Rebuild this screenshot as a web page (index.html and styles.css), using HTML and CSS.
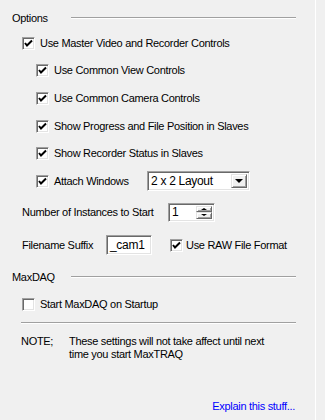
FILE: index.html
```html
<!DOCTYPE html>
<html lang="en">
<head>
  <meta charset="UTF-8">
  <title>Options</title>
  <link rel="stylesheet" href="styles.css">
</head>
<body>
  <div class="panel">

    <!-- Options group -->
    <div class="group-header">
      <span class="group-title">Options</span>
      <span class="etched"></span>
    </div>

    <label class="row first">
      <span class="checkbox checked"><svg width="9" height="9" viewBox="0 0 9 9"><path d="M1 4 L3 6.5 L8 1.5" fill="none" stroke="#000" stroke-width="2"/></svg></span>
      <span>Use Master Video and Recorder Controls</span>
    </label>

    <label class="row sub gap7">
      <span class="checkbox checked"><svg width="9" height="9" viewBox="0 0 9 9"><path d="M1 4 L3 6.5 L8 1.5" fill="none" stroke="#000" stroke-width="2"/></svg></span>
      <span>Use Common View Controls</span>
    </label>

    <label class="row sub">
      <span class="checkbox checked"><svg width="9" height="9" viewBox="0 0 9 9"><path d="M1 4 L3 6.5 L8 1.5" fill="none" stroke="#000" stroke-width="2"/></svg></span>
      <span>Use Common Camera Controls</span>
    </label>

    <label class="row sub">
      <span class="checkbox checked"><svg width="9" height="9" viewBox="0 0 9 9"><path d="M1 4 L3 6.5 L8 1.5" fill="none" stroke="#000" stroke-width="2"/></svg></span>
      <span>Show Progress and File Position in Slaves</span>
    </label>

    <label class="row sub gap7">
      <span class="checkbox checked"><svg width="9" height="9" viewBox="0 0 9 9"><path d="M1 4 L3 6.5 L8 1.5" fill="none" stroke="#000" stroke-width="2"/></svg></span>
      <span>Show Recorder Status in Slaves</span>
    </label>

    <div class="row sub">
      <span class="checkbox checked"><svg width="9" height="9" viewBox="0 0 9 9"><path d="M1 4 L3 6.5 L8 1.5" fill="none" stroke="#000" stroke-width="2"/></svg></span>
      <span class="attach-label">Attach Windows</span>
      <div class="combo">
        <span class="combo-text">2 x 2 Layout</span>
        <span class="combo-button"><span class="arrow-down"></span></span>
      </div>
    </div>

    <div class="row indent gap11">
      <span class="instances-label">Number of Instances to Start</span>
      <div class="spin">
        <span class="spin-text">1</span>
        <span class="spin-buttons">
          <span class="spin-btn"><span class="arrow-up small"></span></span>
          <span class="spin-btn"><span class="arrow-down small"></span></span>
        </span>
      </div>
    </div>

    <div class="row indent gap13">
      <span class="suffix-label">Filename Suffix</span>
      <div class="textbox">_cam1</div>
      <span class="checkbox checked raw"><svg width="9" height="9" viewBox="0 0 9 9"><path d="M1 4 L3 6.5 L8 1.5" fill="none" stroke="#000" stroke-width="2"/></svg></span>
      <span>Use RAW File Format</span>
    </div>

    <!-- MaxDAQ group -->
    <div class="group-header maxdaq">
      <span class="group-title">MaxDAQ</span>
      <span class="etched"></span>
    </div>

    <label class="row gap10">
      <span class="checkbox"></span>
      <span>Start MaxDAQ on Startup</span>
    </label>

    <div class="separator"></div>

    <div class="note">
      <span class="note-tag">NOTE;</span>
      <span class="note-text">These settings will not take affect until next time you start MaxTRAQ</span>
    </div>

    <div class="explain">
      <a href="#" class="explain-link">Explain this stuff...</a>
    </div>

  </div>
</body>
</html>
```

FILE: styles.css
```css
body {
  margin: 0;
  padding: 0;
  background-color: #f0f0f0;
  font-family: 'Liberation Sans', Arial, sans-serif;
  font-size: 11px;
  letter-spacing: -0.3px;
  color: #000;
}

.panel {
  width: 316px;
  height: 420px;
  box-sizing: border-box;
  border-right: 1px solid #fff;
  padding-top: 11px;
  background-color: #f0f0f0;
}

/* group headers with etched line */
.group-header {
  display: flex;
  align-items: center;
  height: 14px;
  padding-left: 12px;
}

.group-header.maxdaq {
  margin-top: 15px;
}

.etched {
  width: 225px;
  margin-left: auto;
  margin-right: 19px;
  border-top: 1px solid #a0a0a0;
  border-bottom: 1px solid #fff;
}

/* rows */
.row {
  display: flex;
  align-items: center;
  height: 20px;
  margin-top: 8px;
  padding-left: 22px;
}

.row.first {
  margin-top: 8px;
}

.row.sub {
  padding-left: 36px;
}

.row.gap7 {
  margin-top: 7px;
}

.row.gap10 {
  margin-top: 10px;
}

.row.gap11 {
  margin-top: 11px;
}

.row.gap13 {
  margin-top: 13px;
}

.checkbox {
  display: inline-flex;
  align-items: center;
  justify-content: center;
  width: 13px;
  height: 13px;
  box-sizing: border-box;
  margin-right: 5px;
  background-color: #fff;
  border-top: 1px solid #a0a0a0;
  border-left: 1px solid #a0a0a0;
  border-right: 1px solid #fff;
  border-bottom: 1px solid #fff;
  box-shadow: inset 1px 1px 0 #696969, inset -1px -1px 0 #e3e3e3;
  flex-shrink: 0;
}

.checkbox svg {
  display: block;
}

/* combo box */
.attach-label {
  width: 93px;
}

.combo {
  display: flex;
  width: 103px;
  height: 20px;
  box-sizing: border-box;
  background-color: #fff;
  border-top: 1px solid #a0a0a0;
  border-left: 1px solid #a0a0a0;
  border-right: 1px solid #fff;
  border-bottom: 1px solid #fff;
  box-shadow: inset 1px 1px 0 #696969, inset -1px -1px 0 #e3e3e3;
  padding: 2px;
}

.combo-text {
  flex: 1;
  line-height: 14px;
  padding-left: 1px;
  font-size: 12px;
}

.combo-button,
.spin-btn {
  display: flex;
  align-items: center;
  justify-content: center;
  background-color: #f0f0f0;
  box-sizing: border-box;
  border-top: 1px solid #e3e3e3;
  border-left: 1px solid #e3e3e3;
  border-right: 1px solid #696969;
  border-bottom: 1px solid #696969;
  box-shadow: inset 1px 1px 0 #fff, inset -1px -1px 0 #a0a0a0;
}

.combo-button {
  width: 16px;
  height: 14px;
}

.arrow-down {
  width: 0;
  height: 0;
  border-left: 4px solid transparent;
  border-right: 4px solid transparent;
  border-top: 4px solid #000;
}

.arrow-up {
  width: 0;
  height: 0;
  border-left: 4px solid transparent;
  border-right: 4px solid transparent;
  border-bottom: 4px solid #000;
}

.arrow-down.small {
  border-left-width: 3px;
  border-right-width: 3px;
  border-top-width: 2px;
}

.arrow-up.small {
  border-left-width: 3px;
  border-right-width: 3px;
  border-bottom-width: 2px;
}

/* spin box */
.instances-label {
  width: 146px;
}

.spin {
  display: flex;
  width: 47px;
  height: 19px;
  box-sizing: border-box;
  background-color: #fff;
  border-top: 1px solid #a0a0a0;
  border-left: 1px solid #a0a0a0;
  border-right: 1px solid #fff;
  border-bottom: 1px solid #fff;
  box-shadow: inset 1px 1px 0 #696969, inset -1px -1px 0 #e3e3e3;
  padding: 2px;
}

.spin-text {
  flex: 1;
  line-height: 13px;
  padding-left: 1px;
  font-size: 12px;
}

.spin-buttons {
  display: flex;
  flex-direction: column;
  width: 16px;
}

.spin-btn {
  flex: 1;
}

/* suffix row */
.suffix-label {
  width: 84px;
}

.textbox {
  width: 46px;
  height: 20px;
  box-sizing: border-box;
  background-color: #fff;
  border-top: 1px solid #a0a0a0;
  border-left: 1px solid #a0a0a0;
  border-right: 1px solid #fff;
  border-bottom: 1px solid #fff;
  box-shadow: inset 1px 1px 0 #696969, inset -1px -1px 0 #e3e3e3;
  padding: 2px 3px;
  line-height: 15px;
  font-size: 12px;
}

.checkbox.raw {
  margin-left: 18px;
  margin-right: 3px;
}

/* bottom part */
.separator {
  margin: 8px 19px 0 21px;
  border-top: 1px solid #a0a0a0;
  border-bottom: 1px solid #fff;
}

.note {
  display: flex;
  margin-top: 11px;
  padding-left: 21px;
  line-height: 13px;
}

.note-tag {
  width: 48px;
  flex-shrink: 0;
}

.note-text {
  width: 215px;
}

.explain {
  margin-top: 39px;
  padding-right: 20px;
  text-align: right;
  line-height: 13px;
}

.explain-link {
  color: #0000ff;
  text-decoration: none;
}
```
